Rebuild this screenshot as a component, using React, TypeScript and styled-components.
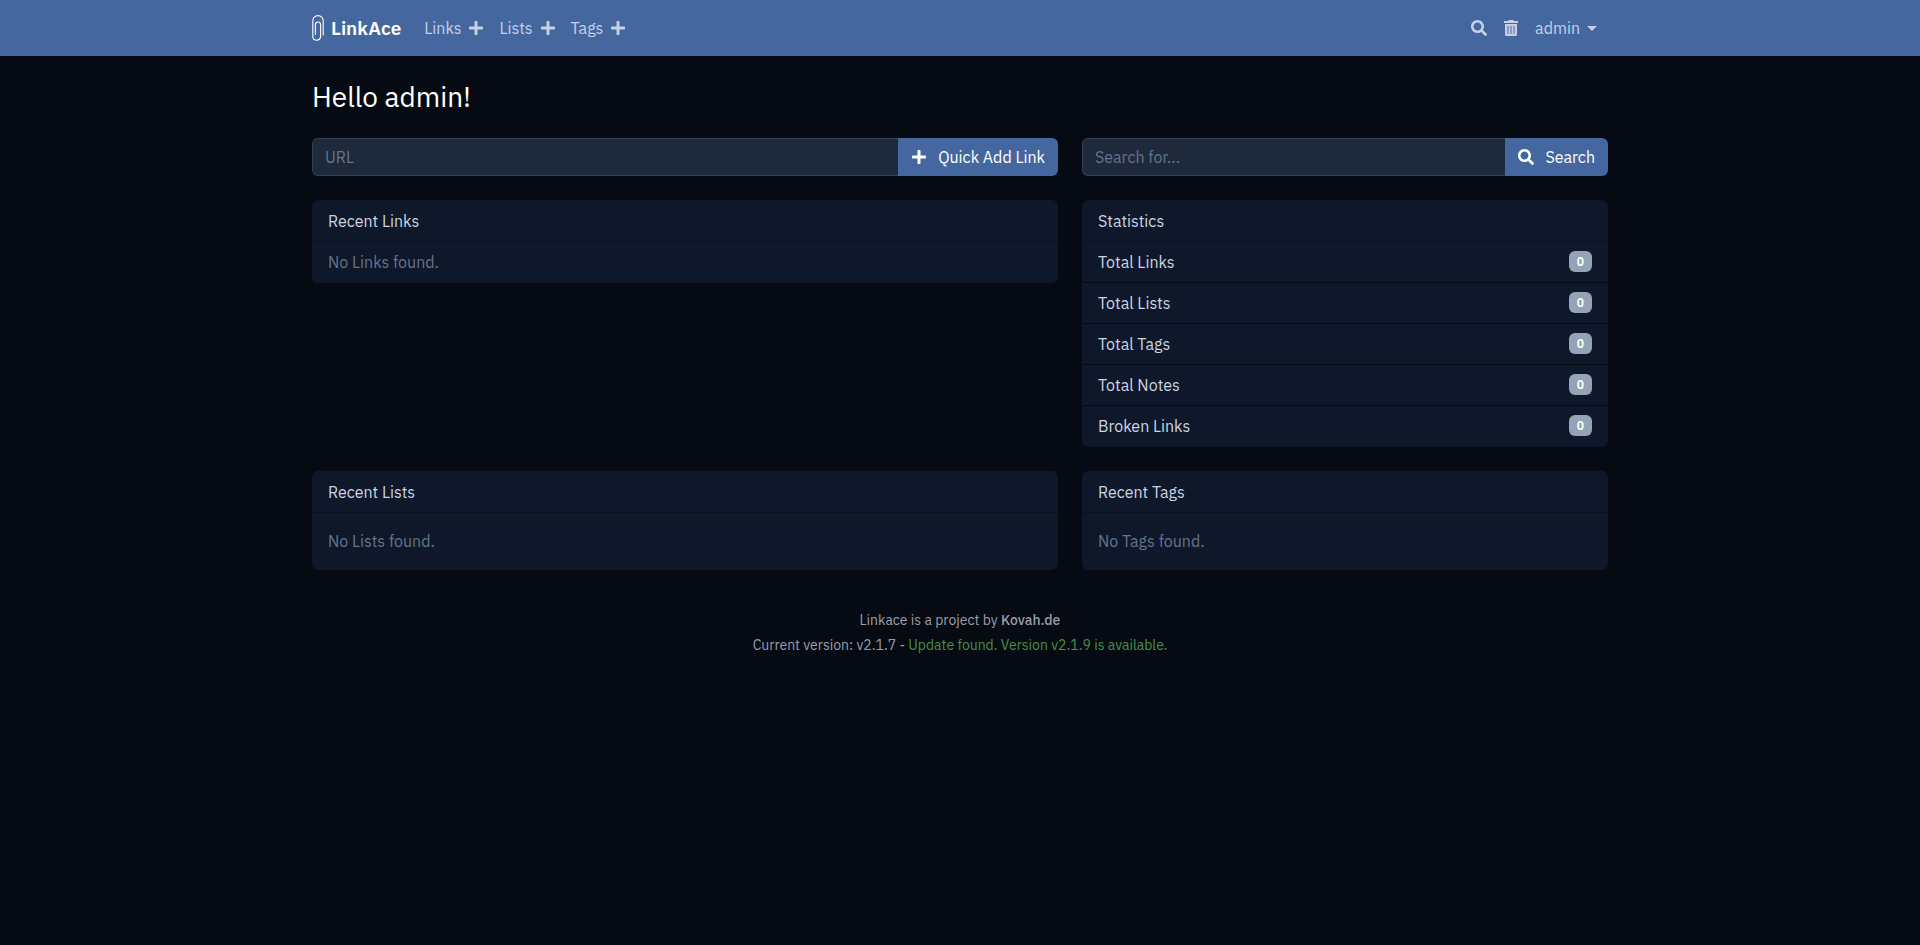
import React from 'react';
import styled, { createGlobalStyle } from 'styled-components';
import { FaPlus, FaSearch } from 'react-icons/fa';

const GlobalStyle = createGlobalStyle`
  *, *::before, *::after { box-sizing: border-box; }
  body {
    margin: 0;
    background: #060a12;
    color: #cbd5e1;
    font-family: 'IBM Plex Sans', Roboto, 'Liberation Sans', sans-serif;
    font-size: 16px;
    line-height: 24px;
  }
  a { color: inherit; text-decoration: none; }
  button, input { font: inherit; }
`;

const Container = styled.div`
  width: 100%;
  max-width: 1320px;
  margin: 0 auto;
  padding: 0 12px;
`;

const Navbar = styled.header`
  background: #45679f;
  color: #c7d1e2;
`;

const NavInner = styled(Container)`
  display: flex;
  align-items: center;
  height: 56px;
`;

const Brand = styled.a`
  display: flex;
  align-items: center;
  gap: 7px;
  margin-right: 23px;
  color: #fff;
  font-size: 19px;
  font-weight: 600;
`;

const NavGroup = styled.nav`
  display: flex;
  align-items: center;
  gap: 15px;
`;

const NavPair = styled.div`
  display: flex;
  align-items: center;
  gap: 7px;
`;

const IconLink = styled.a`
  display: flex;
  align-items: center;
`;

const UserArea = styled.div`
  display: flex;
  align-items: center;
  gap: 17px;
  margin-left: auto;
  padding-right: 11px;
`;

const UserMenu = styled.button`
  display: flex;
  align-items: center;
  gap: 7px;
  padding: 0;
  border: 0;
  background: none;
  color: inherit;
  cursor: pointer;
`;

const Caret = styled.span`
  border-top: 5px solid currentColor;
  border-left: 5px solid transparent;
  border-right: 5px solid transparent;
`;

const Main = styled.main`
  padding-top: 24px;
`;

const Greeting = styled.h1`
  margin: 0 0 24px;
  color: #fff;
  font-size: 28px;
  font-weight: 400;
  line-height: 34px;
`;

const Row = styled.div`
  display: flex;
  flex-wrap: wrap;
  margin: 0 -12px;
`;

const Column = styled.div<{ $span: number }>`
  flex: 0 0 auto;
  width: calc(100% * ${(p) => p.$span} / 12);
  margin-bottom: 24px;
  padding: 0 12px;

  @media (max-width: 767px) {
    width: 100%;
  }
`;

const InputGroup = styled.form`
  display: flex;
  height: 38px;
`;

const TextInput = styled.input`
  flex: 1;
  min-width: 0;
  padding: 6px 12px;
  border: 1px solid #334155;
  border-right: 0;
  border-radius: 6px 0 0 6px;
  background: #1e293b;
  color: #cbd5e1;
  outline: none;

  &::placeholder { color: #64748b; opacity: 1; }
`;

const SubmitButton = styled.button`
  display: flex;
  align-items: center;
  gap: 11px;
  padding: 0 13px;
  border: 0;
  border-radius: 0 6px 6px 0;
  background: #45679f;
  color: #fff;
  white-space: nowrap;
  cursor: pointer;

  svg { width: auto; height: 16px; }
`;

const Card = styled.section`
  overflow: hidden;
  border: 1px solid #0e1628;
  border-radius: 6px;
  background: #0f172a;
`;

const CardHeader = styled.h2`
  margin: 0;
  padding: 8px 15px;
  border-bottom: 1px solid #0a101d;
  font-size: 16px;
  font-weight: 400;
`;

const CardBody = styled.div<{ $compact?: boolean }>`
  padding: ${(p) => (p.$compact ? '8px 15px' : '16px 15px')};
  color: #64748b;
`;

const StatList = styled.ul`
  margin: 0;
  padding: 0;
  list-style: none;
`;

const StatItem = styled.li`
  display: flex;
  align-items: center;
  justify-content: space-between;
  padding: 8px 15px;

  & + & { border-top: 1px solid #050a12; }
`;

const Badge = styled.span`
  margin-bottom: 1px;
  padding: 4px 8px;
  border-radius: 6px;
  background: #94a3b8;
  color: #fff;
  font-size: 12px;
  font-weight: 600;
  line-height: 13px;
`;

const Footer = styled.footer`
  padding: 14px 0 24px;
  color: #9a9fa8;
  font-size: 14px;
  line-height: 25px;
  text-align: center;

  p { margin: 0; }
`;

const ProjectLink = styled.a`
  font-weight: 500;
`;

const UpdateLink = styled.a`
  && { color: #459245; }
`;

const PaperclipLogo = () => (
  <svg width="12" height="27" viewBox="0 0 12 27" fill="none" stroke="#fff" strokeWidth="1.1" strokeLinecap="round" aria-hidden="true">
    <path d="M11.2 20V5.8A5.2 5.2 0 0 0 .8 5.8V22.2A4 4 0 0 0 8.6 22.2V9.6A2.6 2.6 0 0 0 3.4 9.6V19.6" />
  </svg>
);

const TrashIcon = () => (
  <svg width="14" height="16" viewBox="0 0 14 16" fill="currentColor" aria-hidden="true">
    <path d="M0 1h4.2l.6-1h4.4l.6 1H14v2H0zM1 4h12v10.5a1.5 1.5 0 0 1-1.5 1.5h-9A1.5 1.5 0 0 1 1 14.5zM3.5 6v8h1V6zm3 0v8h1V6zm3 0v8h1V6z" fillRule="evenodd" />
  </svg>
);

const navItems = ['Links', 'Lists', 'Tags'];
const stats = ['Total Links', 'Total Lists', 'Total Tags', 'Total Notes', 'Broken Links'];

export default function App() {
  return (
    <>
      <GlobalStyle />
      <Navbar>
        <NavInner>
          <Brand href="#"><PaperclipLogo />LinkAce</Brand>
          <NavGroup aria-label="Main">
            {navItems.map((name) => (
              <NavPair key={name}>
                <a href="#">{name}</a>
                <IconLink href="#" aria-label={`Add ${name}`}><FaPlus size={16} /></IconLink>
              </NavPair>
            ))}
          </NavGroup>
          <UserArea>
            <IconLink href="#" aria-label="Search"><FaSearch size={16} /></IconLink>
            <IconLink href="#" aria-label="Trash"><TrashIcon /></IconLink>
            <UserMenu type="button">admin<Caret /></UserMenu>
          </UserArea>
        </NavInner>
      </Navbar>
      <Container>
        <Main>
          <Greeting>Hello admin!</Greeting>
          <Row>
            <Column $span={7}>
              <InputGroup onSubmit={(e) => e.preventDefault()}>
                <TextInput type="text" placeholder="URL" aria-label="URL" />
                <SubmitButton type="submit"><FaPlus />Quick Add Link</SubmitButton>
              </InputGroup>
            </Column>
            <Column $span={5}>
              <InputGroup onSubmit={(e) => e.preventDefault()}>
                <TextInput type="text" placeholder="Search for..." aria-label="Search for" />
                <SubmitButton type="submit"><FaSearch />Search</SubmitButton>
              </InputGroup>
            </Column>
            <Column $span={7}>
              <Card>
                <CardHeader>Recent Links</CardHeader>
                <CardBody $compact>No Links found.</CardBody>
              </Card>
            </Column>
            <Column $span={5}>
              <Card>
                <CardHeader>Statistics</CardHeader>
                <StatList>
                  {stats.map((name) => (
                    <StatItem key={name}>{name}<Badge>0</Badge></StatItem>
                  ))}
                </StatList>
              </Card>
            </Column>
            <Column $span={7}>
              <Card>
                <CardHeader>Recent Lists</CardHeader>
                <CardBody>No Lists found.</CardBody>
              </Card>
            </Column>
            <Column $span={5}>
              <Card>
                <CardHeader>Recent Tags</CardHeader>
                <CardBody>No Tags found.</CardBody>
              </Card>
            </Column>
          </Row>
        </Main>
        <Footer>
          <p>Linkace is a project by <ProjectLink href="#">Kovah.de</ProjectLink></p>
          <p>Current version: v2.1.7 - <UpdateLink href="#">Update found. Version v2.1.9 is available.</UpdateLink></p>
        </Footer>
      </Container>
    </>
  );
}
